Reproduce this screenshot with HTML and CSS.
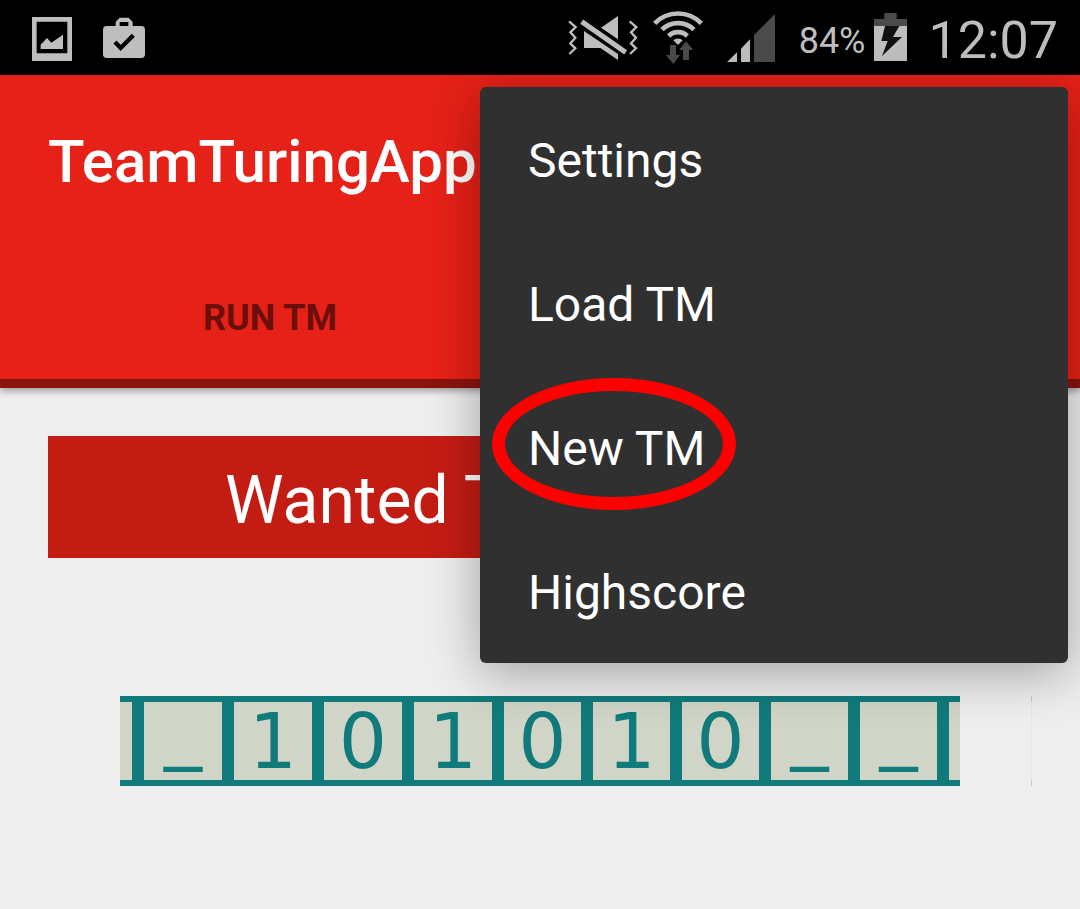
FILE: index.html
```html
<!DOCTYPE html>
<html lang="en">
<head>
<meta charset="utf-8">
<meta name="viewport" content="width=device-width, initial-scale=1">
<title>TeamTuringApp</title>
<link rel="stylesheet" href="styles.css">
</head>
<body>
<div class="status-bar">
  <div class="notifications">
    <svg class="icon" width="40" height="75" viewBox="96 0 120 225" aria-hidden="true">
      <path class="lit" fill-rule="evenodd" d="M96 51h120v132H96zM110 65v95h92V65z"/>
      <path class="lit" d="M122 147v-13l19-20 13 14 35-24v43z"/>
    </svg>
    <svg class="icon" width="42" height="75" viewBox="309 0 126 225" aria-hidden="true">
      <path class="lit" fill-rule="evenodd" d="M347 80V66l12-13h27l12 13v14zM359 66v13h26V66z"/>
      <rect class="lit" x="309" y="78" width="126" height="96" rx="11"/>
      <path class="cut" d="M345 126l17 18 38-38"/>
    </svg>
  </div>
  <div class="system">
    <svg class="icon" width="70" height="75" viewBox="54 0 210 225" aria-hidden="true">
      <path class="zigzag" d="M57 64l20 17-16 16 15 16-15 17 15 15-18 17M239 64l20 17-16 16 15 16-15 17 15 15-18 17"/>
      <path class="lit" d="M153 83l51-35v70zM102 93l102 69v18l-53-36h-49z"/>
      <path class="bar-gap" d="M97 66l129 89"/>
      <path class="bar" d="M95 65l132 92"/>
    </svg>
    <svg class="icon wifi" width="50" height="75" viewBox="309 0 150 225" aria-hidden="true">
      <path class="arc" d="M314 70a98 98 0 0 1 140 0M336 89a69 69 0 0 1 96 0M356 108a40 40 0 0 1 56 0"/>
      <path class="lit" d="M384 135l-14-14a20 20 0 0 1 28 0z"/>
      <path class="dim" d="M360 135h18v30h12l-20 27-22-27h12zM408 124l22 26h-13v30h-18v-30h-12z"/>
    </svg>
    <svg class="icon signal" width="48" height="75" viewBox="528 0 144 225" aria-hidden="true">
      <path class="lit" d="M528 186l30-29v29zM570 186v-40l27-28v68z"/>
      <path class="dim" d="M609 186v-81l63-63v144z"/>
    </svg>
    <span class="percent">84%</span>
    <svg class="icon battery" width="33" height="75" viewBox="279 0 99 225" aria-hidden="true">
      <path class="dim" d="M310 39h37v18h31v21h-99V57h31z"/>
      <path class="lit" d="M279 78h99v105h-99z"/>
      <path class="bolt" d="M312 78h43l-19 33h27l-60 57 17-45h-19z"/>
    </svg>
    <time class="clock">12:07</time>
  </div>
</div>

<div class="app">
  <header class="app-bar">
    <h1 class="title">TeamTuringApp</h1>
    <nav class="tabs">
      <button class="tab" type="button">RUN TM</button>
    </nav>
  </header>

  <main class="content">
    <h2 class="banner">Wanted T</h2>
    <div class="tape-row">
      <div class="tape">
        <span class="cell"></span>
        <span class="cell blank">_</span>
        <span class="cell">1</span>
        <span class="cell">0</span>
        <span class="cell">1</span>
        <span class="cell">0</span>
        <span class="cell">1</span>
        <span class="cell">0</span>
        <span class="cell blank">_</span>
        <span class="cell blank">_</span>
        <span class="cell"></span>
      </div>
      <span class="edge"></span>
    </div>
  </main>

  <div class="menu" role="menu">
    <button class="menu-item" type="button" role="menuitem">Settings</button>
    <button class="menu-item" type="button" role="menuitem">Load TM</button>
    <button class="menu-item circled" type="button" role="menuitem">New TM</button>
    <button class="menu-item" type="button" role="menuitem">Highscore</button>
  </div>
</div>
</body>
</html>
```
FILE: styles.css
```css
*,
*::after {
  box-sizing: border-box;
}

body {
  margin: 0;
  min-height: 100vh;
  display: flex;
  flex-direction: column;
  background: #eeeeee;
  font-family: Roboto, "Liberation Sans", sans-serif;
}

h1,
h2 {
  margin: 0;
}

button {
  border: 0;
  background: none;
  font-family: inherit;
}

.status-bar {
  display: flex;
  justify-content: space-between;
  padding: 0 22px 0 32px;
  background: #000;
  color: #bebebe;
}

.notifications {
  display: flex;
  gap: 31px;
}

.system {
  display: flex;
  align-items: center;
}

.icon {
  display: block;
  fill: none;
}

.lit {
  fill: #bebebe;
}

.dim {
  fill: #4b4b4b;
}

.cut {
  stroke: #000;
  stroke-width: 13;
}

.zigzag {
  stroke: #bebebe;
  stroke-width: 7;
}

.bar {
  stroke: #bebebe;
  stroke-width: 15;
}

.bar-gap {
  stroke: #000;
  stroke-width: 26;
}

.arc {
  stroke: #bebebe;
  stroke-width: 14;
}

.bolt {
  fill: #111;
}

.wifi {
  margin-left: 15px;
}

.signal {
  margin: 0 24px;
}

.percent {
  font-size: 36px;
  line-height: 40px;
  padding-top: 6px;
}

.battery {
  margin: 0 22px 0 8px;
}

.clock {
  font-size: 52px;
  line-height: 60px;
  padding-top: 6px;
}

.app {
  position: relative;
  flex: 1;
}

.app-bar {
  background: #e62117;
  border-bottom: 9px solid #8a140e;
  box-shadow: 0 3px 7px rgba(0, 0, 0, 0.35);
}

.title {
  padding: 0 48px;
  color: #fff;
  font-size: 60px;
  font-weight: 500;
  line-height: 174px;
}

.tabs {
  display: grid;
  grid-template-columns: 1fr 1fr;
}

.tab {
  height: 130px;
  padding: 8px 0 0;
  color: #6b0f0b;
  font-size: 36px;
  font-weight: 700;
  line-height: 40px;
}

.content {
  padding: 48px;
}

.banner {
  padding: 20px 0 12px 177px;
  background: #c31c13;
  color: #fff;
  font-size: 66px;
  font-weight: 400;
  line-height: 90px;
}

.tape-row {
  display: flex;
  gap: 71px;
  margin-top: 138px;
  padding-left: 72px;
}

.tape {
  flex: 1;
  display: grid;
  grid-template-columns: 12fr repeat(4, 78fr) repeat(5, 77fr) 11fr;
  gap: 12px;
  padding: 6px 0;
  background: #107b7a;
}

.cell {
  height: 78px;
  background: #d1d5c8;
  color: #107b7a;
  font-family: "DejaVu Sans", sans-serif;
  font-size: 76px;
  line-height: 80px;
  text-align: center;
}

.blank {
  line-height: 52px;
}

.edge {
  width: 1px;
  border: solid #c8c8c8;
  border-width: 6px 0;
  background: #e6e6e6;
}

.menu {
  position: absolute;
  top: 12px;
  right: 12px;
  width: 588px;
  display: flex;
  flex-direction: column;
  border-radius: 6px;
  background: #303030;
  box-shadow: 0 10px 52px rgba(0, 0, 0, 0.33);
}

.menu-item {
  position: relative;
  padding: 4px 48px 0;
  color: #fff;
  font-size: 48px;
  line-height: 140px;
  text-align: left;
}

.circled::after {
  content: "";
  position: absolute;
  top: 3px;
  left: 12px;
  width: 244px;
  height: 132px;
  border: 13px solid #f00;
  border-radius: 50%;
}
```
